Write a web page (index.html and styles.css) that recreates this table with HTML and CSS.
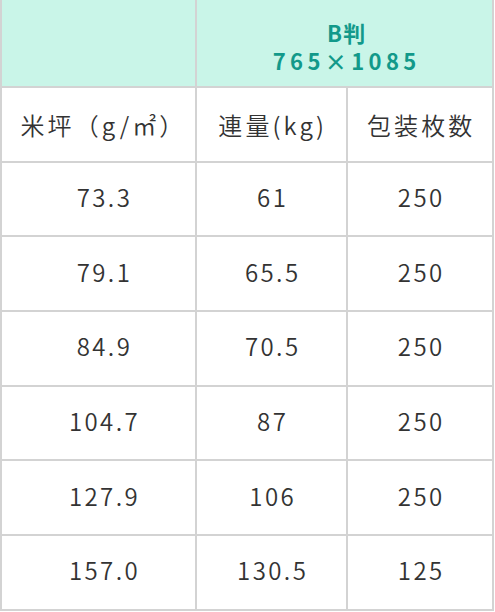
FILE: index.html
```html
<!DOCTYPE html>
<html lang="ja">
<head>
<meta charset="utf-8">
<link rel="stylesheet" href="styles.css">
</head>
<body>
<div class="table">
  <div class="cell head blank"></div>
  <div class="cell head title span2"><span class="t1">B判</span><span class="t2">765×1085</span></div>
  <div class="cell label first">米坪（g/㎡）</div>
  <div class="cell label">連量(kg)</div>
  <div class="cell label">包装枚数</div>
  <div class="cell first">73.3</div><div class="cell">61</div><div class="cell">250</div>
  <div class="cell first">79.1</div><div class="cell">65.5</div><div class="cell">250</div>
  <div class="cell first">84.9</div><div class="cell">70.5</div><div class="cell">250</div>
  <div class="cell first">104.7</div><div class="cell">87</div><div class="cell">250</div>
  <div class="cell first">127.9</div><div class="cell">106</div><div class="cell">250</div>
  <div class="cell first">157.0</div><div class="cell">130.5</div><div class="cell">125</div>
</div>
</body>
</html>
```
FILE: styles.css
```css
html, body {
  margin: 0;
  padding: 0;
  background: #fff;
}
.table {
  display: grid;
  grid-template-columns: 195px 151px 146px;
  grid-template-rows: 88px repeat(7, 74.7px);
  width: 494px;
  box-sizing: border-box;
  border-left: 2px solid #d3d3d3;
  font-family: "Noto Sans CJK JP", "Noto Sans", sans-serif;
  font-weight: 350;
  color: #333;
}
.cell {
  display: flex;
  align-items: center;
  justify-content: center;
  border-right: 2px solid #d3d3d3;
  border-bottom: 2px solid #d3d3d3;
  font-size: 24px;
  letter-spacing: 0.1em;
  padding: 0 0 5px 0.1em;
  box-sizing: border-box;
}
.first {
  padding-left: 12px;
}
.head {
  background: #c9f5e8;
}
.span2 {
  grid-column: span 2;
}
.title {
  flex-direction: column;
  color: #12998a;
  font-weight: 700;
  font-size: 22px;
  line-height: 28px;
  padding: 6px 0 0 0.2em;
}
.t1 {
  letter-spacing: 0.05em;
}
.t2 {
  letter-spacing: 0.2em;
}
.label {
  font-size: 24px;
  letter-spacing: 0.13em;
  padding-bottom: 0;
}
.label.first {
  padding-left: 10px;
}
```
